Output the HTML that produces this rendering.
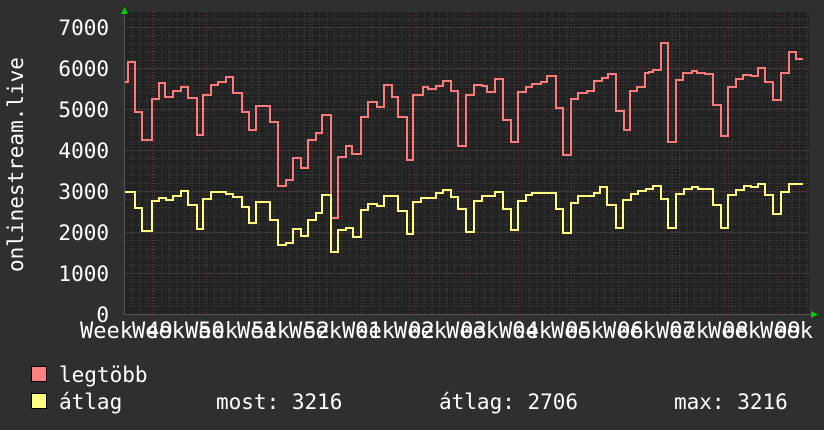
<!DOCTYPE html>
<html><head><meta charset="utf-8"><style>
html,body{margin:0;padding:0;background:#2f2f2f;}
svg{display:block;}
text{font-family:"DejaVu Sans Mono","Liberation Mono",monospace;fill:#ffffff;font-size:21px;}
</style></head><body>
<svg width="824" height="430" viewBox="0 0 824 430" xmlns="http://www.w3.org/2000/svg">
<defs>
<pattern id="minx" x="124" y="0" width="7.5" height="430" patternUnits="userSpaceOnUse">
<line x1="0.5" y1="0" x2="0.5" y2="430" stroke="#4a4a4a" stroke-width="1" stroke-dasharray="1,2"/>
</pattern>
<pattern id="miny" x="0" y="314" width="824" height="8.2" patternUnits="userSpaceOnUse">
<line x1="0" y1="0.5" x2="824" y2="0.5" stroke="#4a4a4a" stroke-width="1" stroke-dasharray="1,2"/>
</pattern>
</defs>
<rect x="0" y="0" width="824" height="430" fill="#2f2f2f"/>
<rect x="124" y="12" width="685" height="302" fill="#222222"/>
<rect x="124" y="12" width="685" height="302" fill="url(#minx)"/>
<rect x="124" y="12" width="685" height="302" fill="url(#miny)"/>
<g stroke="#6a3434" stroke-width="1" stroke-dasharray="1,2">
<line x1="124" y1="27.5" x2="809" y2="27.5"/>
<line x1="124" y1="68.5" x2="809" y2="68.5"/>
<line x1="124" y1="109.5" x2="809" y2="109.5"/>
<line x1="124" y1="150.5" x2="809" y2="150.5"/>
<line x1="124" y1="191.5" x2="809" y2="191.5"/>
<line x1="124" y1="232.5" x2="809" y2="232.5"/>
<line x1="124" y1="273.5" x2="809" y2="273.5"/>
<line x1="152.5" y1="12" x2="152.5" y2="318"/>
<line x1="204.5" y1="12" x2="204.5" y2="318"/>
<line x1="257.5" y1="12" x2="257.5" y2="318"/>
<line x1="309.5" y1="12" x2="309.5" y2="318"/>
<line x1="361.5" y1="12" x2="361.5" y2="318"/>
<line x1="414.5" y1="12" x2="414.5" y2="318"/>
<line x1="466.5" y1="12" x2="466.5" y2="318"/>
<line x1="518.5" y1="12" x2="518.5" y2="318"/>
<line x1="571.5" y1="12" x2="571.5" y2="318"/>
<line x1="623.5" y1="12" x2="623.5" y2="318"/>
<line x1="675.5" y1="12" x2="675.5" y2="318"/>
<line x1="728.5" y1="12" x2="728.5" y2="318"/>
<line x1="780.5" y1="12" x2="780.5" y2="318"/>
</g>
<line x1="124" y1="314.5" x2="812" y2="314.5" stroke="#555" stroke-width="1"/>
<line x1="124.5" y1="10" x2="124.5" y2="314" stroke="#555" stroke-width="1"/>
<polygon points="121,14 124.5,7 128,14" fill="#00cc00"/>
<polygon points="811,311 818,314.5 811,318" fill="#00cc00"/>

<path fill="none" stroke="#ff7b7b" stroke-width="2" d="M125 82 H128 V62 H135 V112 H142 V140 H152 V99 H159 V83 H165 V97 H173 V91 H181 V87 H188 V98 H197 V135 H203 V95 H211 V85 H218 V82 H226 V77 H233 V93 H242 V112 H249 V130 H256 V106 H270 V122 H278 V186 H286 V180 H293 V158 H301 V168 H308 V140 H316 V133 H322 V115 H331 V218 H338 V157 H346 V146 H352 V154 H361 V117 H368 V102 H377 V107 H384 V85 H392 V97 H398 V117 H407 V160 H413 V95 H423 V87 H428 V89 H436 V86 H443 V81 H451 V91 H458 V146 H466 V95 H474 V85 H482 V86 H487 V92 H495 V79 H503 V120 H511 V142 H518 V92 H526 V87 H532 V84 H541 V82 H547 V76 H556 V108 H563 V155 H571 V99 H578 V93 H587 V91 H594 V81 H602 V78 H608 V74 H616 V111 H624 V130 H630 V91 H637 V87 H645 V73 H649 V72 H653 V70 H661 V43 H668 V142 H676 V80 H683 V73 H692 V71 H697 V73 H705 V74 H713 V105 H721 V136 H728 V87 H736 V79 H743 V75 H751 V76 H758 V68 H765 V82 H773 V100 H781 V73 H789 V52 H796 V59 H803"/>
<path fill="none" stroke="#ffff80" stroke-width="2" d="M125 192 H135 V208 H142 V231 H152 V201 H159 V198 H166 V200 H173 V196 H181 V191 H188 V205 H197 V229 H203 V199 H211 V192 H226 V194 H233 V197 H242 V207 H249 V223 H256 V202 H270 V220 H278 V245 H286 V243 H293 V229 H301 V236 H308 V220 H316 V213 H322 V195 H331 V252 H338 V230 H346 V228 H353 V237 H361 V210 H368 V204 H377 V206 H384 V196 H398 V211 H407 V234 H413 V202 H421 V198 H436 V193 H443 V190 H451 V197 H458 V209 H466 V232 H474 V201 H482 V196 H495 V192 H503 V209 H511 V230 H518 V201 H526 V195 H532 V193 H556 V209 H563 V233 H571 V203 H578 V196 H594 V193 H600 V187 H607 V205 H616 V228 H623 V200 H631 V194 H638 V191 H646 V189 H653 V186 H661 V199 H668 V228 H676 V194 H684 V189 H692 V187 H698 V189 H713 V205 H721 V228 H728 V195 H736 V190 H744 V186 H751 V187 H758 V184 H765 V195 H773 V214 H781 V192 H789 V184 H803"/>

<g text-anchor="end">
<text x="109" y="35">7000</text>
<text x="109" y="76">6000</text>
<text x="109" y="117">5000</text>
<text x="109" y="158">4000</text>
<text x="109" y="199">3000</text>
<text x="109" y="240">2000</text>
<text x="109" y="281">1000</text>
<text x="109" y="322">0</text>
</g>
<text transform="translate(23,272) rotate(-90)">onlinestream.live</text>

<g font-size="22">
<text x="80" y="338" style="font-size:22px">Week 49</text>
<text x="132" y="338" style="font-size:22px">Week 50</text>
<text x="185" y="338" style="font-size:22px">Week 51</text>
<text x="237" y="338" style="font-size:22px">Week 52</text>
<text x="289" y="338" style="font-size:22px">Week 01</text>
<text x="342" y="338" style="font-size:22px">Week 02</text>
<text x="394" y="338" style="font-size:22px">Week 03</text>
<text x="446" y="338" style="font-size:22px">Week 04</text>
<text x="499" y="338" style="font-size:22px">Week 05</text>
<text x="551" y="338" style="font-size:22px">Week 06</text>
<text x="603" y="338" style="font-size:22px">Week 07</text>
<text x="656" y="338" style="font-size:22px">Week 08</text>
<text x="708" y="338" style="font-size:22px">Week 09</text>
<text x="760" y="338" style="font-size:22px">Week 10</text>
</g>

<rect x="31.5" y="366.5" width="15" height="15" fill="#ff8080" stroke="#000" stroke-width="1"/>
<rect x="31.5" y="393.5" width="15" height="15" fill="#ffff80" stroke="#000" stroke-width="1"/>
<text x="59" y="382">legtöbb</text>
<text x="59" y="409">átlag</text>
<text x="216" y="409">most: 3216</text>
<text x="439" y="409">átlag: 2706</text>
<text x="674" y="409">max: 3216</text>
</svg>
</body></html>
